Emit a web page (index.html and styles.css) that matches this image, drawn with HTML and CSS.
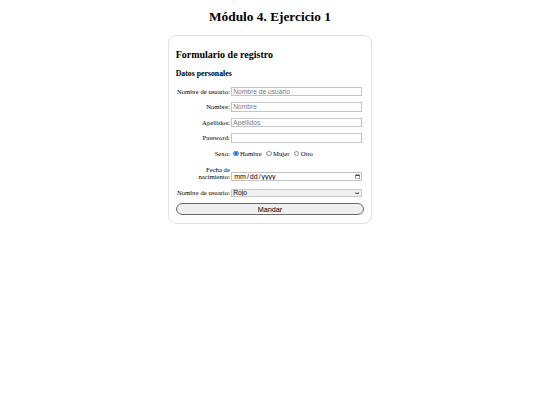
FILE: index.html
```html
<!DOCTYPE html>
<html lang="es">
<head>
<meta charset="utf-8">
<title>Módulo 4. Ejercicio 1</title>
<link rel="stylesheet" href="styles.css">
</head>
<body>
<h1 class="title">Módulo 4. Ejercicio 1</h1>
<form class="card">
  <h2 class="card-title">Formulario de registro</h2>
  <h3 class="section-title">Datos personales</h3>
  <div class="rows">
    <div class="row">
      <label class="label" for="user">Nombre de usuario:</label>
      <input class="field" id="user" type="text" placeholder="Nombre de usuario">
    </div>
    <div class="row">
      <label class="label" for="name">Nombre:</label>
      <input class="field" id="name" type="text" placeholder="Nombre">
    </div>
    <div class="row">
      <label class="label" for="last">Apellidos:</label>
      <input class="field" id="last" type="text" placeholder="Apellidos">
    </div>
    <div class="row">
      <label class="label" for="pass">Password:</label>
      <input class="field" id="pass" type="password">
    </div>
    <div class="row row-sexo">
      <span class="label">Sexo:</span>
      <span class="radios"><input class="radio" type="radio" name="sexo" id="h" checked><label class="opt" for="h">Hombre</label><input class="radio" type="radio" name="sexo" id="m"><label class="opt" for="m">Mujer</label><input class="radio" type="radio" name="sexo" id="o"><label class="opt" for="o">Otro</label></span>
    </div>
    <div class="row row-date">
      <label class="label" for="fecha">Fecha de nacimiento:</label>
      <input class="field date" id="fecha" type="date">
    </div>
    <div class="row row-select">
      <label class="label" for="color">Nombre de usuario:</label>
      <span class="select-wrap"><select class="field select" id="color"><option>Rojo</option><option>Verde</option><option>Azul</option></select><svg class="chevron" viewBox="0 0 8 5" width="4.4" height="2.8"><path d="M1 1 L4 4 L7 1" fill="none" stroke="#444" stroke-width="2"/></svg></span>
    </div>
  </div>
  <button class="submit" type="button">Mandar</button>
</form>
</body>
</html>
```

FILE: styles.css
```css
html {
  background: #ffffff;
}

body {
  margin: 0;
  font-family: "Liberation Serif", "Times New Roman", serif;
  font-size: 6.67px;
  color: #000000;
}

.title {
  text-align: center;
  font-size: 13.33px;
  font-weight: bold;
  margin: 9.4px 0 9.8px;
}

.card {
  width: 204px;
  box-sizing: border-box;
  margin: 0 auto;
  padding: 6.67px 6.67px 7.5px;
  border: 1px solid #e2e2e2;
  border-radius: 8px;
}

.card-title {
  font-size: 10px;
  margin: 6px 0 9.5px;
}

.section-title {
  font-size: 7.8px;
  margin: 0 0 8.4px;
}

.rows {
  display: flex;
  flex-direction: column;
  gap: 6px;
  margin-bottom: 6px;
}

.row {
  display: grid;
  grid-template-columns: 54.2px 131px;
  column-gap: 1.4px;
  align-items: last baseline;
}

.row-sexo {
  margin-top: 1px;
}

.row-date {
  margin-top: 2.5px;
}

.row-select {
  margin-top: 2px;
}

.label {
  text-align: right;
}

.field {
  width: 131px;
  height: 9.5px;
  box-sizing: border-box;
  margin: 0;
  padding: 0 1px;
  border: 1px solid #c4c4c4;
  border-radius: 0;
  font-family: "Liberation Sans", Arial, sans-serif;
  font-size: 6.67px;
  color: #000000;
  background: #ffffff;
  outline: none;
}

.field::placeholder {
  color: #7a7a7a;
}

.date {
  font-size: 7px;
  height: 9px;
}

.date::-webkit-datetime-edit-text {
  padding: 0;
}

.date::-webkit-calendar-picker-indicator {
  margin: 0;
  padding: 0;
  width: 5px;
  height: 5px;
}

.select-wrap {
  position: relative;
  display: block;
}

.select {
  appearance: none;
  display: block;
  height: 8px;
  padding: 0 1px;
  background: #efefef;
  border-color: #c9c9c9;
  line-height: 6px;
}

.chevron {
  position: absolute;
  right: 2.5px;
  top: 2.7px;
  pointer-events: none;
}

.radios {
  white-space: nowrap;
}

.radio {
  appearance: none;
  box-sizing: border-box;
  width: 5.4px;
  height: 5.4px;
  margin: 1.25px 1.25px 0 2.1px;
  vertical-align: baseline;
  border: 0.6px solid #8c8c8c;
  border-radius: 50%;
  background: #ffffff;
}

.radio:checked {
  border-color: #1a73e8;
  background: radial-gradient(circle, #1a73e8 0 55%, #ffffff 70% 100%);
}

.opt {
  margin-right: 2.6px;
}

.submit {
  display: block;
  width: 100%;
  height: 12.3px;
  margin: 0;
  padding: 0;
  font-family: "Liberation Sans", Arial, sans-serif;
  font-size: 7.2px;
  color: #000000;
  background: #efefef;
  border: 1px solid #6a6a6a;
  border-radius: 6.2px;
}
```
